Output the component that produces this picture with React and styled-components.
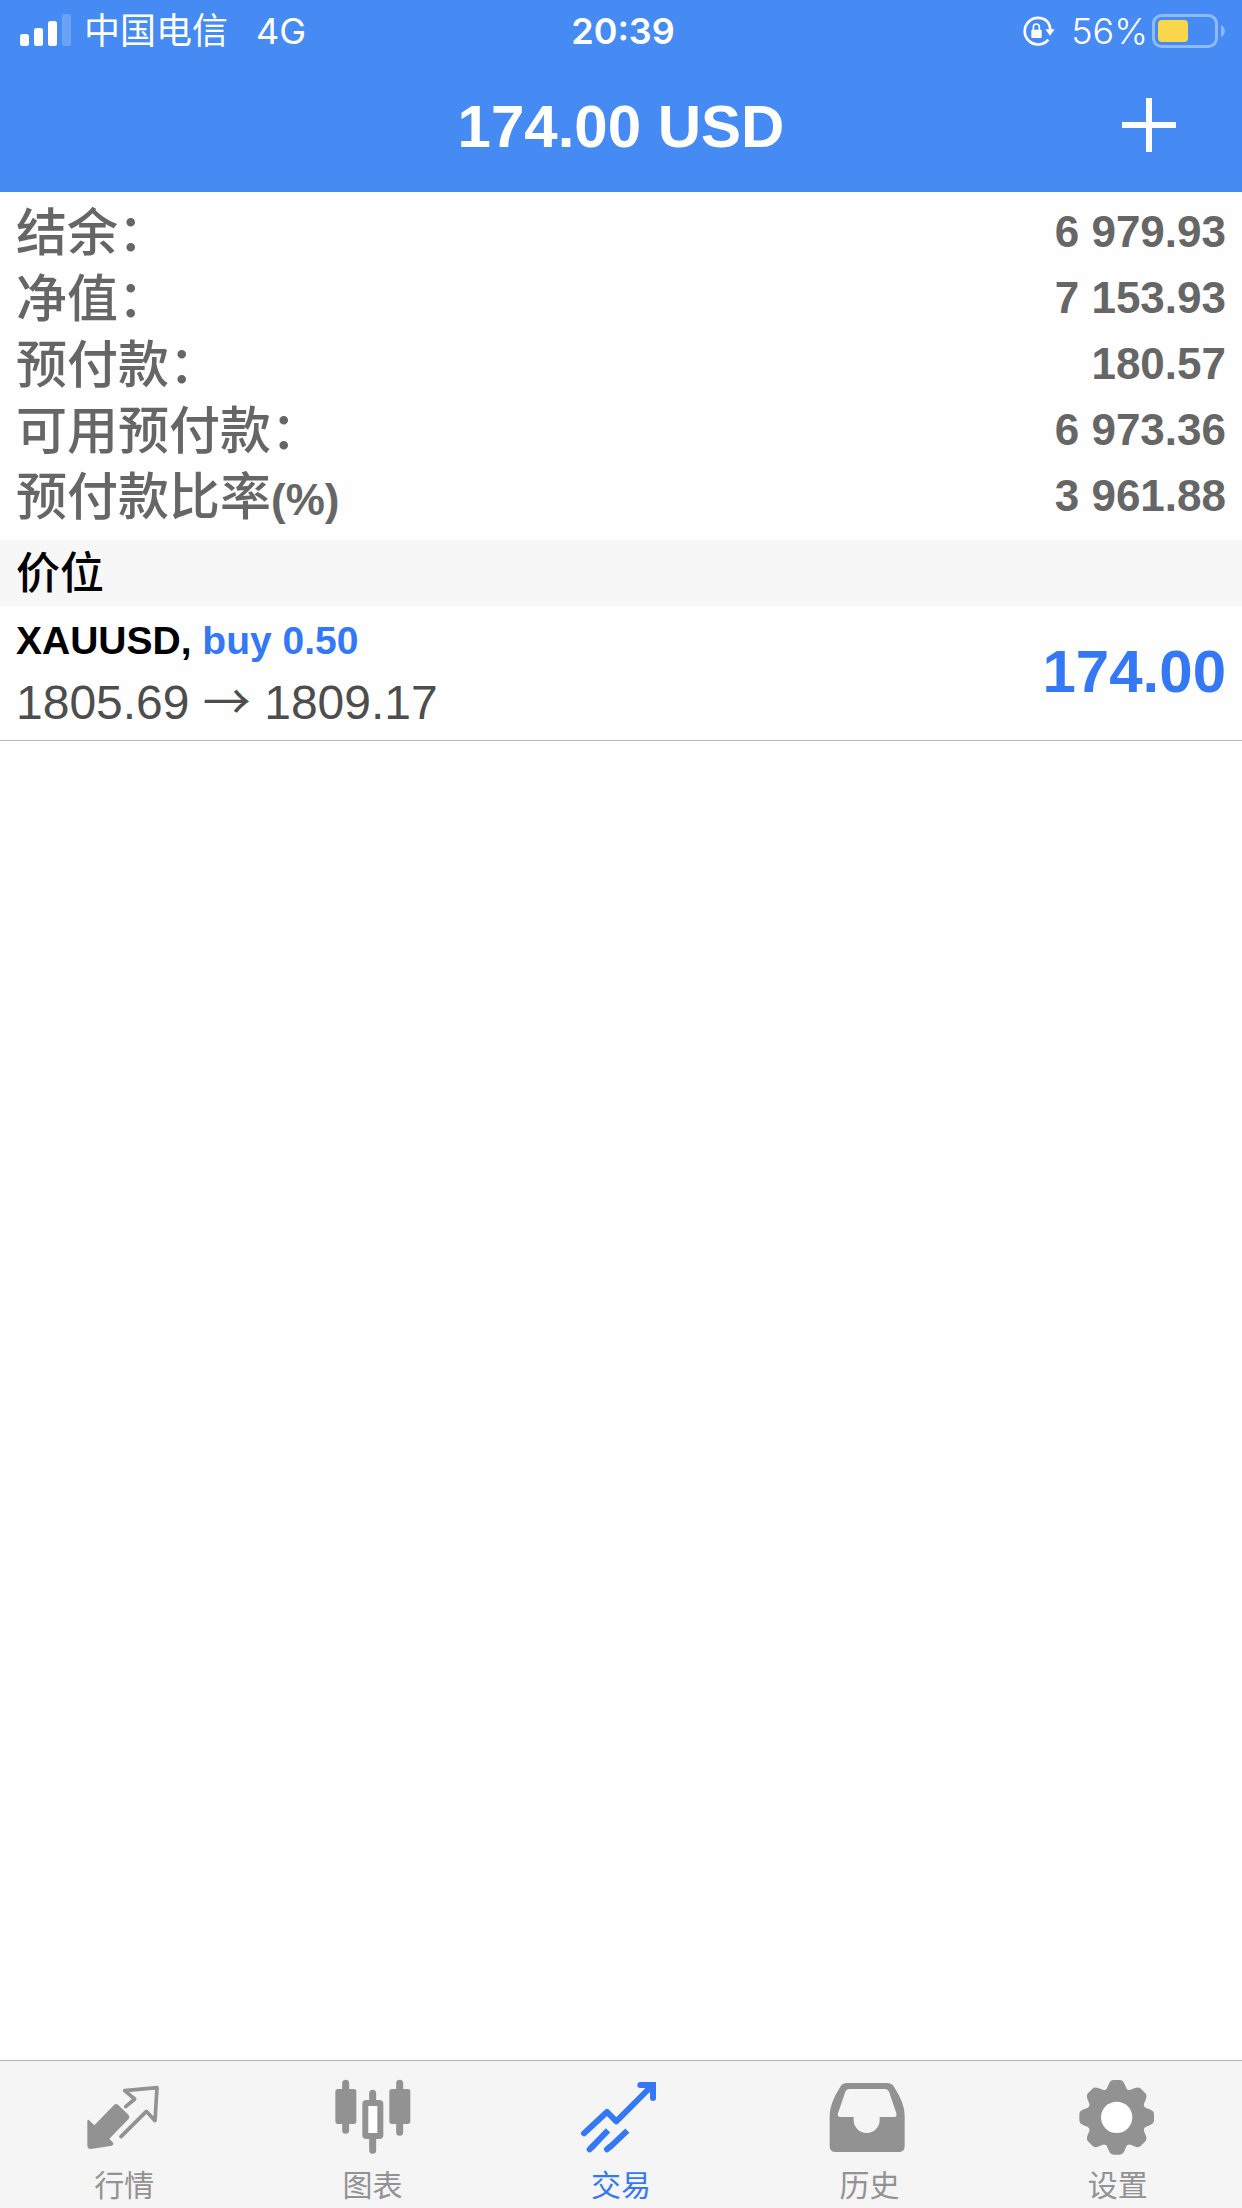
import styled, { createGlobalStyle } from "styled-components";

const summary = [
  { label: "结余：", value: "6 979.93" },
  { label: "净值：", value: "7 153.93" },
  { label: "预付款：", value: "180.57" },
  { label: "可用预付款：", value: "6 973.36" },
  { label: "预付款比率", unit: "(%)", value: "3 961.88" },
];

const positions = [
  {
    id: 1,
    symbol: "XAUUSD",
    side: "buy 0.50",
    open: "1805.69",
    current: "1809.17",
    profit: "174.00",
  },
];

const SignalIcon = () => (
  <svg width="52" height="34" viewBox="0 0 52 34" fill="#fff" aria-hidden="true">
    <rect x="0" y="20" width="9" height="12" rx="2.5" />
    <rect x="14" y="14" width="9" height="18" rx="2.5" />
    <rect x="28" y="7" width="9" height="25" rx="2.5" />
    <rect x="42" y="0" width="9" height="32" rx="2.5" opacity="0.2" />
  </svg>
);

const LockIcon = () => (
  <svg width="34" height="32" viewBox="0 0 102 96" fill="none" aria-hidden="true">
    <path d="M82 74A40 40 0 1 1 81 22Q87 30 88 44" stroke="#fff" strokeWidth="8" />
    <path d="M73 43H101L87 62Z" fill="#fff" />
    <rect x="31" y="44" width="31" height="25" rx="3" fill="#fff" />
    <path d="M37 46V36a9 9 0 0 1 18 0V46" stroke="#fff" strokeWidth="5" />
  </svg>
);

const BatteryIcon = () => (
  <svg width="74" height="34" viewBox="0 0 74 34" fill="none" aria-hidden="true">
    <rect x="1.5" y="1.5" width="63" height="31" rx="8" stroke="#8fb9f8" strokeWidth="3" />
    <rect x="6" y="6" width="30" height="22" rx="4" fill="#f9d64a" />
    <path d="M69 11c5 2 5 10 0 12z" fill="#8fb9f8" />
  </svg>
);

const tabs = [
  {
    name: "行情",
    box: "108 72 288 252",
    icon: (
      <>
        <path
          d="M142 212Q144 207 149 212L163 226L222 165Q228 159 235 165L265 194Q271 201 265 208L208 266L220 279Q222 285 215 287L153 297Q142 298 142 286Z"
          fill="currentColor"
        />
        <path
          d="M257 170L284 147L254 122L351 113L345 212L319 184L243 260"
          fill="none"
          stroke="currentColor"
          strokeWidth="11"
          strokeLinejoin="round"
          strokeLinecap="round"
        />
      </>
    ),
  },
  {
    name: "图表",
    box: "104 72 288 252",
    icon: (
      <>
        <path
          d="M166 100V241M328 100V247M247 130V160M247 260V301"
          stroke="currentColor"
          strokeWidth="21"
          strokeLinecap="round"
        />
        <rect x="135" y="117" width="63" height="105" rx="8" fill="currentColor" />
        <rect x="297" y="117" width="63" height="105" rx="8" fill="currentColor" />
        <rect
          x="225"
          y="159"
          width="45"
          height="99"
          rx="3"
          fill="#fff"
          stroke="currentColor"
          strokeWidth="18"
        />
      </>
    ),
  },
  {
    name: "交易",
    box: "102 72 288 252",
    active: true,
    icon: (
      <g fill="none" stroke="currentColor" strokeWidth="18">
        <path
          d="M135 250L204 186L232 214L338 108"
          strokeLinecap="round"
          strokeLinejoin="round"
        />
        <path d="M304 105H342V144" strokeLinecap="round" />
        <path d="M310 105H342V137Z" fill="currentColor" stroke="none" />
        <path d="M158 292L207 241M212 292L265 242" />
        <path d="M152 298L160 290M204 298L212 291" strokeLinecap="round" />
      </g>
    ),
  },
  {
    name: "历史",
    box: "124 72 288 252",
    icon: (
      <path
        fillRule="evenodd"
        fill="currentColor"
        d="M203 99H322Q337 99 343 110Q375 160 375 195V288Q375 306 357 306H168Q150 306 150 288V195Q150 160 182 110Q188 99 203 99ZM208 117Q201 117 197 125L175 190Q172 201 182 201H222V210A38 38 0 0 0 300 210V201H343Q353 201 350 190L328 125Q324 117 317 117Z"
      />
    ),
  },
  {
    name: "设置",
    box: "119 72 288 252",
    icon: (
      <>
        <g fill="currentColor">
          <circle cx="259" cy="202" r="89" />
          {[0, 45, 90, 135, 180, 225, 270, 315].map((deg) => (
            <path
              key={deg}
              transform={`rotate(${deg} 259 202)`}
              d="M222 125Q231 117 235 103Q240 90 250 90H268Q278 90 283 103Q287 117 296 125Z"
            />
          ))}
        </g>
        <circle cx="259" cy="202" r="47" fill="#fff" />
      </>
    ),
  },
];

const App = () => {
  return (
    <>
      <GlobalStyle />
      <Page>
        <Header>
          <StatusBar>
            <StatusGroup>
              <SignalIcon />
              <Carrier>中国电信</Carrier>
              <span>4G</span>
            </StatusGroup>
            <Clock>20:39</Clock>
            <StatusGroup $end>
              <LockIcon />
              <Percent>56%</Percent>
              <BatteryIcon />
            </StatusGroup>
          </StatusBar>
          <TitleBar>
            <Title>174.00 USD</Title>
            <AddButton type="button" aria-label="新订单">
              <svg width="54" height="54" viewBox="0 0 54 54" aria-hidden="true">
                <path d="M27 0V54M0 27H54" stroke="#fff" strokeWidth="6" />
              </svg>
            </AddButton>
          </TitleBar>
        </Header>

        <Content>
          <Summary>
            {summary.map((el) => (
              <SummaryRow key={el.label}>
                <Label>
                  {el.label}
                  {el.unit && <Unit>{el.unit}</Unit>}
                </Label>
                <Value>{el.value}</Value>
              </SummaryRow>
            ))}
          </Summary>
          <SectionTitle>价位</SectionTitle>
          <PositionList>
            {positions.map((el) => (
              <Position key={el.id}>
                <div>
                  <Deal>
                    {el.symbol}, <span>{el.side}</span>
                  </Deal>
                  <Price>
                    {el.open} <Arrow>→</Arrow> {el.current}
                  </Price>
                </div>
                <Profit>{el.profit}</Profit>
              </Position>
            ))}
          </PositionList>
        </Content>

        <TabBar>
          {tabs.map((tab) => (
            <Tab key={tab.name} type="button" $active={tab.active}>
              <svg width="96" height="84" viewBox={tab.box} aria-hidden="true">
                {tab.icon}
              </svg>
              {tab.name}
            </Tab>
          ))}
        </TabBar>
      </Page>
    </>
  );
};
export default App;

const GlobalStyle = createGlobalStyle`
  * {
    box-sizing: border-box;
    margin: 0;
    padding: 0;
  }
  body {
    background-color: #fefefe;
    font-family: "Liberation Sans", "Noto Sans CJK SC", sans-serif;
  }
  button {
    border: 0;
    background: none;
    cursor: pointer;
  }
`;

const Page = styled.div`
  display: flex;
  flex-direction: column;
  min-height: 100vh;
`;

const Header = styled.header`
  background-color: #468bf4;
  color: #fff;
`;

const StatusBar = styled.div`
  display: grid;
  grid-template-columns: 1fr auto 1fr;
  align-items: center;
  height: 62px;
  padding: 0 16px 0 20px;
  font-family: Inter, "Noto Sans CJK SC", sans-serif;
  font-size: 36px;
  line-height: 48px;
`;

const StatusGroup = styled.div`
  display: flex;
  align-items: center;
  justify-content: ${(props) => (props.$end ? "flex-end" : "flex-start")};
`;

const Carrier = styled.span`
  margin: 0 28px 0 12px;
`;

const Clock = styled.time`
  font-weight: 600;
`;

const Percent = styled.span`
  margin: 0 4px 0 16px;
  font-weight: 300;
`;

const TitleBar = styled.div`
  display: grid;
  grid-template-columns: 1fr auto 1fr;
  align-items: center;
  height: 130px;
`;

const Title = styled.h1`
  grid-column: 2;
  font-size: 60px;
  line-height: 80px;
`;

const AddButton = styled.button`
  display: flex;
  justify-self: end;
  padding: 30px 66px 34px;
`;

const Content = styled.main`
  flex: 1;
`;

const Summary = styled.dl`
  padding: 7px 16px 11px;
  color: #666;
`;

const SummaryRow = styled.div`
  display: flex;
  justify-content: space-between;
`;

const Label = styled.dt`
  padding-top: 4px;
  font-size: 51px;
  font-weight: 500;
  line-height: 62px;
`;

const Unit = styled.span`
  font-size: 44px;
  font-weight: 700;
  line-height: 44px;
`;

const Value = styled.dd`
  font-size: 44px;
  font-weight: 700;
  line-height: 66px;
`;

const SectionTitle = styled.h2`
  padding: 2px 16px 0;
  background-color: #f7f7f7;
  color: #000;
  font-size: 44px;
  font-weight: 500;
  line-height: 64px;
`;

const PositionList = styled.ul`
  list-style: none;
`;

const Position = styled.li`
  display: flex;
  align-items: center;
  justify-content: space-between;
  padding: 4px 16px 6px;
  border-bottom: 1px solid #bbb;
`;

const Deal = styled.p`
  color: #000;
  font-size: 39px;
  font-weight: 700;
  line-height: 62px;
  span {
    color: #3478f6;
  }
`;

const Price = styled.p`
  color: #4d4d4d;
  font-size: 48px;
  line-height: 62px;
`;

const Arrow = styled.span`
  font-family: "Noto Sans CJK SC", sans-serif;
  line-height: 48px;
`;

const Profit = styled.strong`
  color: #3478f6;
  font-size: 60px;
  line-height: 80px;
`;

const TabBar = styled.nav`
  display: flex;
  border-top: 1px solid #b2b2b2;
  background-color: #f5f5f5;
`;

const Tab = styled.button`
  display: flex;
  flex: 1;
  flex-direction: column;
  align-items: center;
  gap: 2px;
  padding: 13px 0 2px;
  color: ${(props) => (props.$active ? "#3478f6" : "#929292")};
  font-family: "Noto Sans CJK SC", sans-serif;
  font-size: 30px;
  line-height: 46px;
`;
